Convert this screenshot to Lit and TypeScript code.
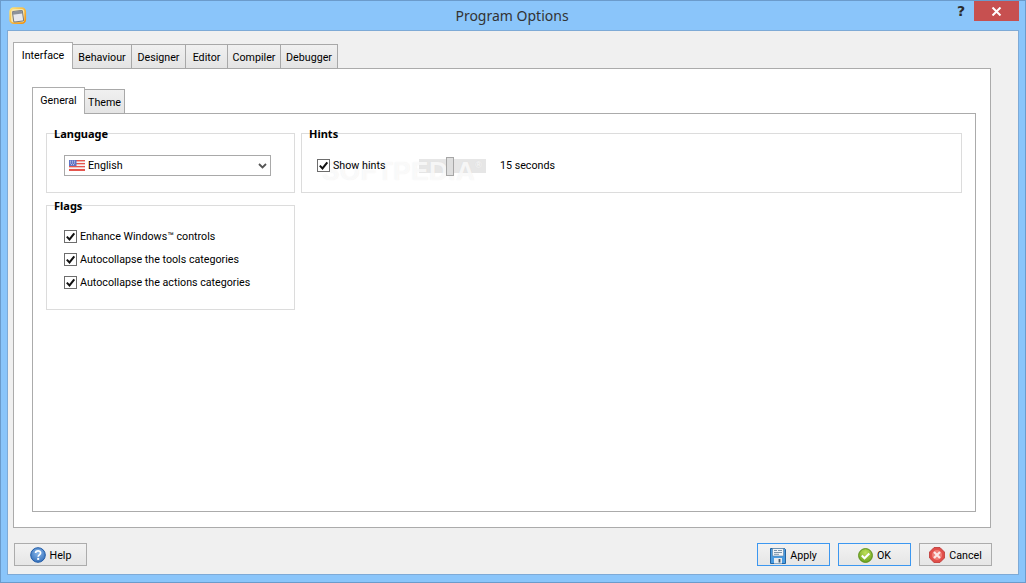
import { LitElement, html, css, svg } from "lit";
import { customElement } from "lit/decorators.js";

const outerTabs = [
  ["Interface", 60], ["Behaviour", 59], ["Designer", 54], ["Editor", 42], ["Compiler", 53], ["Debugger", 57],
] as const;
const innerTabs = [["General", 53], ["Theme", 40]] as const;
const flags = ["Enhance Windows™ controls", "Autocollapse the tools categories", "Autocollapse the actions categories"];

const appIcon = svg`<svg class="app-ico" width="18" height="18" viewBox="0 0 18 18">
  <defs><linearGradient id="ag" x1="0" y1="0" x2="1" y2="1"><stop offset="0" stop-color="#fde37a"/><stop offset="1" stop-color="#f0900c"/></linearGradient></defs>
  <rect x="1.2" y="1.2" width="15" height="15" rx="3.5" fill="#f8e6a8" stroke="url(#ag)" stroke-width="1.8"/>
  <rect x="4" y="4" width="10" height="10.5" rx="1" transform="rotate(-8 9 9)" fill="#e6e8ec" stroke="#77797d"/>
  <rect x="4" y="4" width="9.5" height="3" transform="rotate(-8 9 9)" fill="#8d9299"/>
</svg>`;

const flag = svg`<svg class="flag" width="16" height="11" viewBox="0 0 16 11">
  <rect x="0" y="0" width="16" height="11" fill="#f6f4f4"/>
  <rect x="0" y="0" width="16" height="1.4" fill="#e5564e"/>
  <rect x="0" y="3" width="16" height="1.3" fill="#e5564e"/>
  <rect x="0" y="6" width="16" height="1.3" fill="#e5564e"/>
  <rect x="0" y="9" width="16" height="2" fill="#e5564e"/>
  <rect x="0" y="0" width="7.5" height="6" fill="#5f74c4"/>
  <path d="M1 1.2h1M3 1.2h1M5 1.2h1M1 3h1M3 3h1M5 3h1M2 4.6h1M4 4.6h1" stroke="#dfe4f7" stroke-width=".8"/>
</svg>`;

const helpIcon = svg`<svg width="16" height="16" viewBox="0 0 16 16">
  <defs><radialGradient id="hb" cx=".5" cy=".35" r=".75"><stop offset="0" stop-color="#8ab8ea"/><stop offset="1" stop-color="#2a67b5"/></radialGradient></defs>
  <circle cx="8" cy="8" r="7.3" fill="url(#hb)" stroke="#1f5aa6"/>
  <path d="M5.6 6.1c0-3.1 5-3.1 5 0 0 1.8-2.4 1.8-2.4 3.6" fill="none" stroke="#fff" stroke-width="1.7"/>
  <rect x="7.2" y="10.9" width="2" height="2" fill="#fff"/>
</svg>`;

const saveIcon = svg`<svg width="16" height="17" viewBox="0 0 16 17">
  <path d="M.5 1.5h14l1 1v14h-15z" fill="#4a9be0" stroke="#23639f"/>
  <rect x="2.5" y="1.5" width="11" height="7.5" fill="#f2f5f8" stroke="#5b7fa0" stroke-width=".6"/>
  <path d="M4 3.5h3M8 3.5h4M4 5.5h8M4 7.3h5" stroke="#7d95aa"/>
  <rect x="4" y="11" width="8" height="5.5" fill="#e7ebef"/>
  <rect x="8.6" y="12" width="1.8" height="3.5" fill="#47596a"/>
</svg>`;

const okIcon = svg`<svg width="15" height="15" viewBox="0 0 15 15">
  <defs><radialGradient id="ob" cx=".5" cy=".3" r=".8"><stop offset="0" stop-color="#bfe05a"/><stop offset="1" stop-color="#5f9a16"/></radialGradient></defs>
  <circle cx="7.5" cy="7.5" r="6.9" fill="url(#ob)" stroke="#5b8f1a"/>
  <path d="M3.8 7.6l2.7 2.7 4.8-4.8" fill="none" stroke="#fff" stroke-width="2.1"/>
</svg>`;

const cancelIcon = svg`<svg width="16" height="16" viewBox="0 0 16 16">
  <path d="M5 .6h6L15.4 5v6L11 15.4H5L.6 11V5z" fill="#e2504c" stroke="#c2413e"/>
  <circle cx="8" cy="8" r="5" fill="#ef7f78"/>
  <path d="M5 5l6 6M11 5l-6 6" stroke="#fbe9e8" stroke-width="2.2"/>
</svg>`;

const check = svg`<svg width="13" height="13" viewBox="0 0 13 13">
  <rect x=".5" y=".5" width="12" height="12" fill="#fff" stroke="#6d6d6d"/>
  <path d="M2.8 6.6l2.7 2.8 4.8-6" fill="none" stroke="#111" stroke-width="2"/>
</svg>`;

@customElement("app-root")
export class AppRoot extends LitElement {
  static styles = css`
    :host { display: block; width: 1026px; height: 583px; font-family: Roboto, sans-serif; font-size: 10.7px; color: #000; overflow: hidden; }
    * { box-sizing: border-box; }
    .window { width: 1026px; height: 583px; background: #8ac5fa; border: 1px solid #6b9bcb; display: flex; flex-direction: column; position: relative; }
    .title { height: 29px; flex: none; display: flex; align-items: center; padding-left: 8px; position: relative; }
    .app-ico { display: block; }
    .title-text { position: absolute; left: 0; right: 2px; top: 6px; text-align: center; font-family: "Noto Sans", sans-serif; font-size: 14px; line-height: 18px; color: #333; }
    .ctrls { margin-left: auto; display: flex; align-items: flex-start; align-self: flex-start; margin-right: 6px; }
    .q { width: 17px; font: bold 14px/20px "DejaVu Sans", sans-serif; color: #2b2b2b; }
    .close { width: 45px; height: 20px; background: #c75050; display: flex; align-items: center; justify-content: center; }
    .client { flex: 1; margin: 0 6px 7px 6px; background: #f0f0f0; border: 1px solid #7eaad6; padding: 11px 0 0 5px; display: flex; flex-direction: column; }
    .tabbar { display: flex; align-items: flex-end; height: 27px; flex: none; position: relative; z-index: 1; }
    .tab { height: 25px; padding-top: 1px; background: linear-gradient(#f0f0f0, #e4e4e4); border: 1px solid #a8a8a8; border-left-width: 0; display: flex; align-items: center; justify-content: center; white-space: nowrap; }
    .tab.active { height: 27px; background: #fff; border: 1px solid #adadad; border-bottom: 0; padding: 0 0 1px; }
    .pane { border: 1px solid #ababab; background: #fff; margin-top: -1px; }
    .outer { width: 978px; height: 460px; padding: 18px 0 0 18px; display: flex; flex-direction: column; flex: none; }
    .inner { width: 944px; height: 399px; flex: none; padding: 19px 0 0 13px; display: grid; grid-template-columns: 249px 661px; column-gap: 6px; row-gap: 12px; grid-template-rows: 60px 105px; align-content: start; }
    .group { border: 1px solid #dcdcdc; position: relative; }
    .group > .legend { position: absolute; left: 7px; top: -7px; font-family: "Noto Sans", sans-serif; font-size: 11px; font-weight: 700; line-height: 14px; color: #000; }
    .lang { padding: 21px 0 0 17px; }
    .combo { width: 207px; height: 21px; border: 1px solid #a9a9a9; background: #fff; display: flex; align-items: center; padding-left: 4px; gap: 3px; }
    .combo svg.flag { display: block; }
    .chev { margin-left: auto; margin-right: 3px; display: block; }
    .row { display: flex; align-items: center; gap: 3px; white-space: nowrap; height: 13px; }
    .row svg { flex: none; display: block; }
    .flags { padding: 24px 0 0 17px; display: flex; flex-direction: column; gap: 10px; }
    .hints { padding: 25px 0 0 15px; display: flex; align-items: flex-start; }
    .hint-check { width: 102px; flex: none; position: relative; z-index: 2; }
    .slider { width: 67px; height: 14px; background: #e6e6e6; position: relative; flex: none; }
    .thumb { position: absolute; z-index: 2; left: 27px; top: -2px; width: 8px; height: 19px; background: #dedede; border: 1px solid #a6a6a6; }
    .secs { margin-left: 14px; line-height: 13px; position: relative; z-index: 2; }
    .wm { position: absolute; z-index: 1; left: 20px; top: 16px; font: 700 26px/30px "Liberation Sans", sans-serif; letter-spacing: .5px; color: rgba(255,255,255,.72); pointer-events: none; text-shadow: 0 0 1px rgba(215,215,215,.45); white-space: nowrap; }
    .wm span { font-size: 9px; vertical-align: 12px; font-weight: 400; letter-spacing: 0; }
    .footer { flex: 1; display: flex; padding: 15px 26px 0 1px; gap: 8px; align-items: flex-start; }
    .btn { width: 73px; height: 23px; padding-top: 1px; border: 1px solid #acacac; background: linear-gradient(#f2f2f2, #e6e6e6); display: flex; align-items: center; justify-content: center; gap: 4px; }
    .btn svg { display: block; }
    .btn.focus { border-color: #3c97f0; }
    .spacer { flex: 1; }
  `;

  render() {
    return html`<div class="window">
      <div class="title">
        ${appIcon}
        <div class="title-text">Program Options</div>
        <div class="ctrls">
          <div class="q">?</div>
          <div class="close"><svg width="11" height="9" viewBox="0 0 11 9"><path d="M1.5 .5l8 8M9.5 .5l-8 8" stroke="#fff" stroke-width="2"/></svg></div>
        </div>
      </div>
      <div class="client">
        <div class="tabbar">
          ${outerTabs.map(([t, w], i) => html`<div class="tab ${i === 0 ? "active" : ""}" style="width:${w}px">${t}</div>`)}
        </div>
        <div class="pane outer">
          <div class="tabbar">
            ${innerTabs.map(([t, w], i) => html`<div class="tab ${i === 0 ? "active" : ""}" style="width:${w}px">${t}</div>`)}
          </div>
          <div class="pane inner">
            <div class="group lang">
              <div class="legend">Language</div>
              <div class="combo">${flag}<span>English</span>
                <svg class="chev" width="9" height="6" viewBox="0 0 9 6"><path d="M1 1l3.5 3.5L8 1" fill="none" stroke="#555" stroke-width="1.8"/></svg>
              </div>
            </div>
            <div class="group hints">
              <div class="legend">Hints</div>
              <div class="row hint-check">${check}<span>Show hints</span></div>
              <div class="slider"><div class="thumb"></div></div>
              <div class="secs">15 seconds</div>
              <div class="wm">SOFTPEDIA<span>®</span></div>
            </div>
            <div class="group flags">
              <div class="legend">Flags</div>
              ${flags.map((f) => html`<div class="row">${check}<span>${f}</span></div>`)}
            </div>
          </div>
        </div>
        <div class="footer">
          <div class="btn">${helpIcon}<span>Help</span></div>
          <div class="spacer"></div>
          <div class="btn focus">${saveIcon}<span>Apply</span></div>
          <div class="btn focus">${okIcon}<span>OK</span></div>
          <div class="btn">${cancelIcon}<span>Cancel</span></div>
        </div>
      </div>
    </div>`;
  }
}
